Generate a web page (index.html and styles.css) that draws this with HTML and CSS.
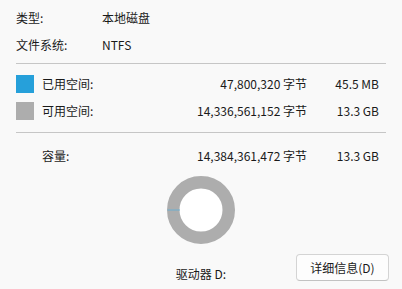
FILE: index.html
```html
<!DOCTYPE html>
<html lang="zh-CN">
<head>
    <meta charset="UTF-8">
    <title>驱动器 D: 属性</title>
    <link rel="stylesheet" href="styles.css">
</head>
<body>
    <div id="panel">
        <div class="info">
            <span>类型:</span><span>本地磁盘</span>
            <span>文件系统:</span><span>NTFS</span>
        </div>
        <hr class="divider">
        <div class="usage">
            <span class="swatch used"></span>
            <span>已用空间:</span>
            <span class="bytes">47,800,320 字节</span>
            <span class="size">45.5 MB</span>

            <span class="swatch free"></span>
            <span>可用空间:</span>
            <span class="bytes">14,336,561,152 字节</span>
            <span class="size">13.3 GB</span>
        </div>
        <hr class="divider">
        <div class="usage capacity">
            <span></span>
            <span>容量:</span>
            <span class="bytes">14,384,361,472 字节</span>
            <span class="size">13.3 GB</span>
        </div>
        <div id="chart">
            <svg width="68" height="68" viewBox="0 0 68 68">
                <circle cx="34" cy="34" r="27.75" fill="#fff" stroke="#adadad" stroke-width="12.5"/>
                <line x1="0.5" y1="34" x2="13" y2="34" stroke="#6aaed0" stroke-width="1"/>
            </svg>
        </div>
        <div class="footer">
            <span class="drive">驱动器 D:</span>
            <button class="details">详细信息(D)</button>
        </div>
    </div>
</body>
</html>
```

FILE: styles.css
```css
body {
    margin: 0;
    background-color: #f9f9f9;
    color: #1a1a1a;
    font-family: "Noto Sans CJK SC", "Noto Sans", sans-serif;
    font-size: 12px;
}
#panel {
    width: 402px;
    height: 289px;
    box-sizing: border-box;
    padding-top: 4px;
}
.info {
    display: grid;
    grid-template-columns: 86px 1fr;
    padding: 0 16px;
    line-height: 27px;
}
.divider {
    border: none;
    border-top: 1px solid #c6c6c6;
    margin: 5px 16px 0 16px;
    height: 0;
}
.usage {
    display: grid;
    grid-template-columns: 26px 1fr auto 72px;
    align-items: center;
    margin: 6px 23px 8px 16px;
    line-height: 27px;
}
.capacity {
    margin-top: 9px;
    margin-bottom: 0;
}
.swatch {
    width: 18px;
    height: 18px;
}
.used {
    background-color: #26a0da;
}
.free {
    background-color: #adadad;
}
.bytes, .size {
    text-align: right;
}
#chart {
    display: flex;
    justify-content: center;
    margin-top: 7px;
    height: 68px;
}
.footer {
    display: grid;
    grid-template-columns: 1fr auto 1fr;
    margin-top: 10px;
    padding: 0 13px;
}
.drive {
    grid-column: 2;
    align-self: end;
    line-height: 16px;
    margin-bottom: -1px;
}
.details {
    grid-column: 3;
    justify-self: end;
    width: 93px;
    height: 27px;
    font-family: inherit;
    font-size: 12px;
    color: #1a1a1a;
    background-color: #fdfdfd;
    border: 1px solid #d4d4d4;
    border-bottom-color: #c2c2c2;
    border-radius: 4px;
    padding: 0;
}
```
